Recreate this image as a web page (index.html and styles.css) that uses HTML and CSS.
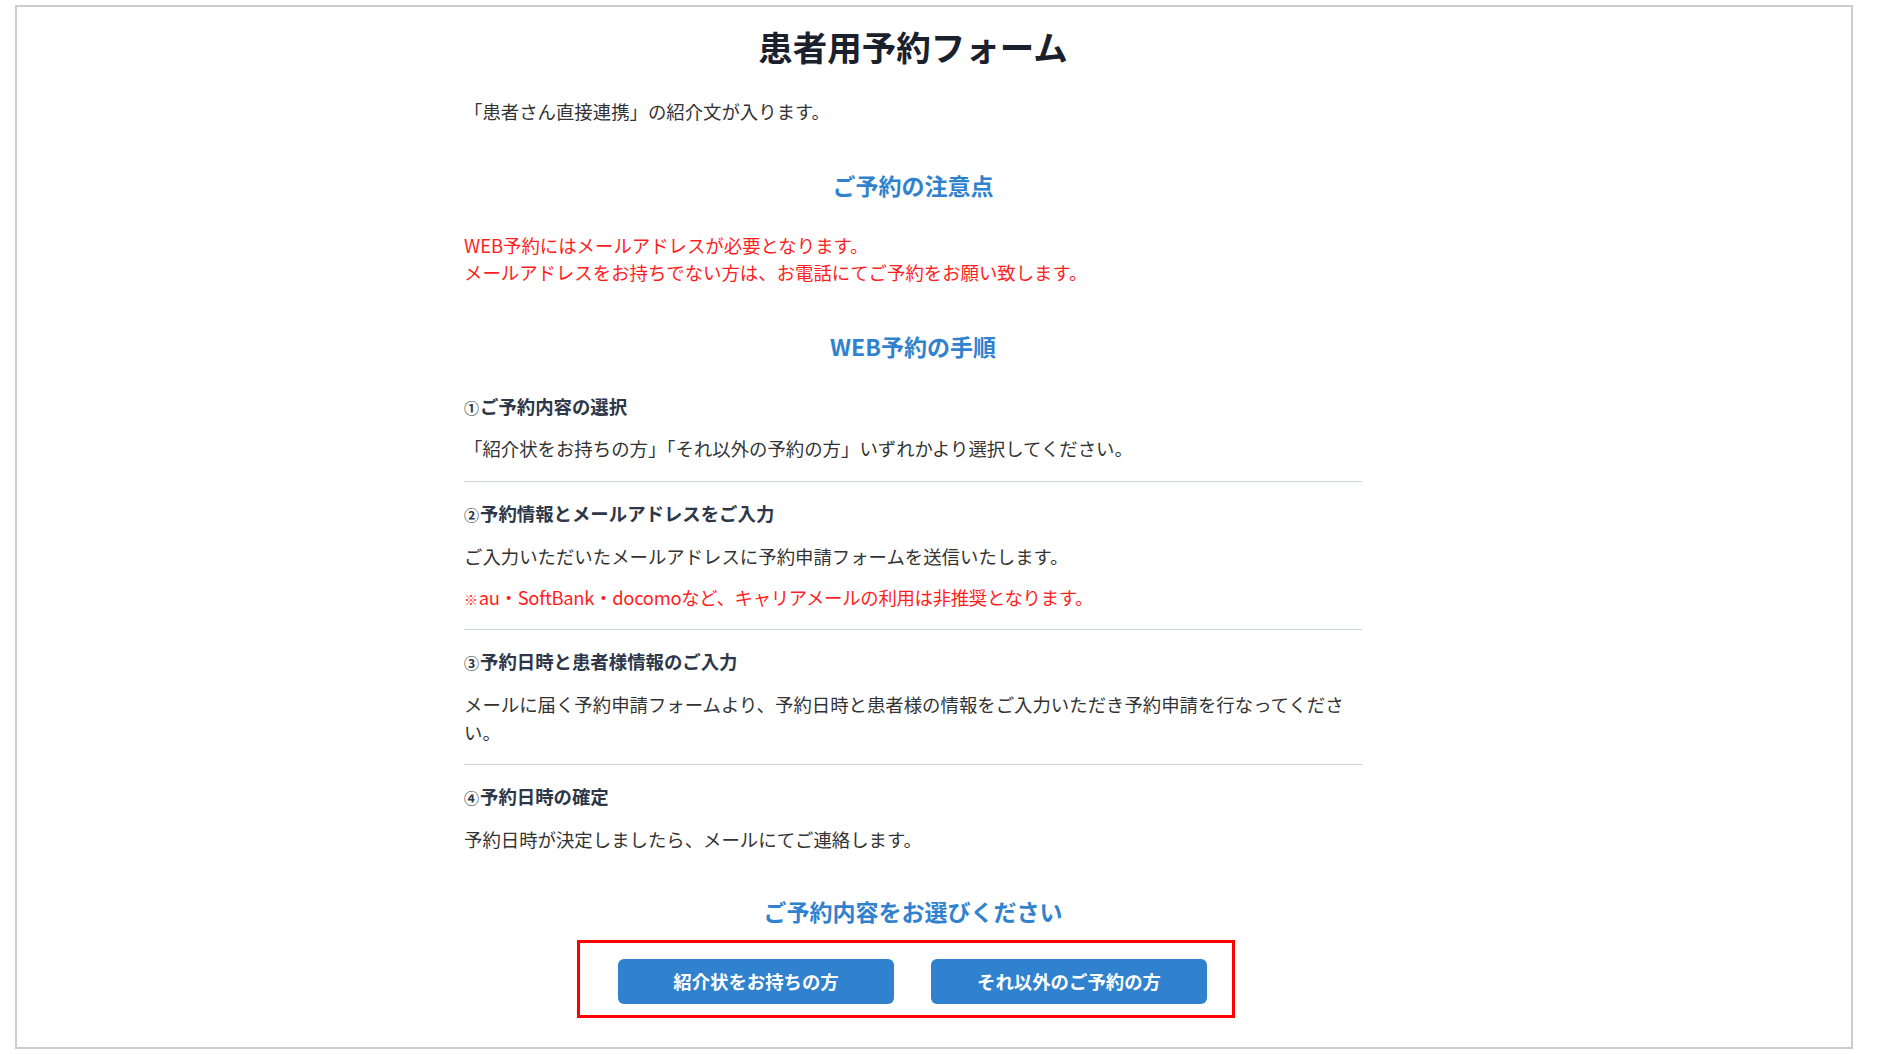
FILE: index.html
```html
<!DOCTYPE html>
<html lang="ja">
<head>
<meta charset="utf-8">
<title>患者用予約フォーム</title>
<link rel="stylesheet" href="styles.css">
</head>
<body>
<div class="frame">
  <main class="content">
    <h1 class="title">患者用予約フォーム</h1>
    <p class="intro">「患者さん直接連携」の紹介文が入ります。</p>

    <h2 class="sec-title sec-notice">ご予約の注意点</h2>
    <div class="notice">
      <p>WEB予約にはメールアドレスが必要となります。</p>
      <p>メールアドレスをお持ちでない方は、お電話にてご予約をお願い致します。</p>
    </div>

    <h2 class="sec-title sec-steps">WEB予約の手順</h2>
    <ol class="steps">
      <li class="step">
        <h3 class="step-title"><span class="num">①</span>ご予約内容の選択</h3>
        <p class="step-text">「紹介状をお持ちの方」「それ以外の予約の方」いずれかより選択してください。</p>
      </li>
      <li class="step">
        <h3 class="step-title"><span class="num">②</span>予約情報とメールアドレスをご入力</h3>
        <p class="step-text">ご入力いただいたメールアドレスに予約申請フォームを送信いたします。</p>
        <p class="step-text step-warn"><span class="mark">※</span>au・SoftBank・docomoなど、キャリアメールの利用は非推奨となります。</p>
      </li>
      <li class="step">
        <h3 class="step-title"><span class="num">③</span>予約日時と患者様情報のご入力</h3>
        <p class="step-text">メールに届く予約申請フォームより、予約日時と患者様の情報をご入力いただき予約申請を行なってください。</p>
      </li>
      <li class="step">
        <h3 class="step-title"><span class="num">④</span>予約日時の確定</h3>
        <p class="step-text">予約日時が決定しましたら、メールにてご連絡します。</p>
      </li>
    </ol>

    <h2 class="sec-title sec-choose">ご予約内容をお選びください</h2>
    <div class="choice">
      <button class="choice-btn" type="button">紹介状をお持ちの方</button>
      <button class="choice-btn" type="button">それ以外のご予約の方</button>
    </div>
  </main>
</div>
</body>
</html>
```

FILE: styles.css
```css
* {
  box-sizing: border-box;
}

html, body {
  margin: 0;
  padding: 0;
  background: #ffffff;
}

body {
  font-family: "Noto Sans CJK JP", "Noto Sans", sans-serif;
  color: #333333;
  font-size: 18.4px;
  line-height: 27.6px;
}

.frame {
  margin: 5px 27px 5px 15px;
  height: 1044px;
  border: 2px solid #cccccc;
  display: flex;
}

.content {
  width: 898px;
  margin-left: 447px;
  padding-top: 18.5px;
  display: flex;
  flex-direction: column;
}

p, h1, h2, h3, ol {
  margin: 0;
  padding: 0;
}

.title {
  font-size: 34.5px;
  line-height: 41px;
  font-weight: 700;
  color: #1a202c;
  text-align: center;
}

.intro {
  margin-top: 31.2px;
}

.sec-title {
  font-size: 23px;
  line-height: 27.6px;
  font-weight: 700;
  color: #3182ce;
  text-align: center;
}

.sec-notice {
  margin-top: 46.5px;
}

.notice {
  margin-top: 32.5px;
  color: #ff1e1e;
}

.sec-steps {
  margin-top: 46.4px;
}

.steps {
  list-style: none;
  margin-top: 13.8px;
}

.step {
  padding: 18px 0 18px;
  display: flex;
  flex-direction: column;
  gap: 13.5px;
  border-bottom: 1px solid #cbd5e0;
}

.step:last-child {
  border-bottom: none;
}

.step-title {
  font-size: 18.4px;
  line-height: 27.6px;
  font-weight: 700;
  color: #2d3748;
  margin-bottom: 1.5px;
}

.num {
  font-size: 15px;
  line-height: 0;
  margin-right: 1px;
}

.step-warn {
  color: #ff1e1e;
  letter-spacing: -0.3px;
}

.mark {
  font-size: 14px;
  line-height: 0;
  margin-right: 1px;
}

.sec-choose {
  margin-top: 27px;
}

.choice {
  margin-top: 14px;
  margin-left: 113px;
  width: 658px;
  border: 3px solid #ff0000;
  padding: 16px 25px 11px 38px;
  display: flex;
  gap: 37px;
}

.choice-btn {
  width: 276px;
  height: 45px;
  border: none;
  border-radius: 6px;
  background: #3182ce;
  color: #ffffff;
  font-family: "Noto Sans CJK JP", "Noto Sans", sans-serif;
  font-size: 18.4px;
  font-weight: 700;
  cursor: pointer;
}
```
